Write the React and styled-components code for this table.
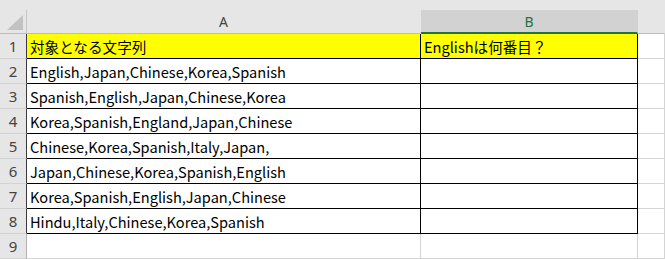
import styled, { createGlobalStyle } from "styled-components";

const GlobalStyle = createGlobalStyle`
  body {
    margin: 0;
    background: #ffffff;
    font-family: "Noto Sans CJK JP", "Noto Sans", sans-serif;
  }
`;

const Sheet = styled.div`
  width: 665px;
  height: 259px;
  overflow: hidden;
  background: #ffffff;
`;

const TopStrip = styled.div`
  height: 10px;
  background: #e6e6e6;
`;

const Row = styled.div`
  display: grid;
  grid-template-columns: 27px 394px 217px 1fr;
  height: ${(p) => (p.$header ? "24px" : "25px")};
`;

const Corner = styled.div`
  position: relative;
  background: #e6e6e6;
  border-right: 1px solid #c6c6c6;
  border-bottom: 1px solid #bdbdbd;
`;

const CornerTriangle = styled.div`
  position: absolute;
  right: 3px;
  bottom: 3px;
  width: 0;
  height: 0;
  border-left: 16px solid transparent;
  border-bottom: 15px solid #c2c2c2;
`;

const ColHeader = styled.div`
  display: flex;
  align-items: center;
  justify-content: center;
  font-family: "Noto Sans", sans-serif;
  font-size: 14px;
  color: ${(p) => (p.$active ? "#217346" : "#444444")};
  background: ${(p) => (p.$active ? "#d2d2d2" : "#e6e6e6")};
  border-right: 1px solid ${(p) => (p.$active ? "#d2d2d2" : "#e6e6e6")};
  border-bottom: ${(p) => (p.$active ? "2px solid #217346" : "1px solid #bdbdbd")};
  box-sizing: border-box;
`;

const RowHeader = styled.div`
  display: flex;
  align-items: center;
  justify-content: center;
  font-family: "Noto Sans", sans-serif;
  font-size: 15px;
  color: #444444;
  background: #e6e6e6;
  border-right: 1px solid ${(p) => (p.$boxed ? "#3a3a3a" : "#b0b0b0")};
  border-bottom: 1px solid #d3d3d3;
  box-sizing: border-box;
`;

const Cell = styled.div`
  display: flex;
  align-items: center;
  padding-left: 3px;
  font-size: 14.6px;
  color: #000000;
  white-space: nowrap;
  overflow: hidden;
  background: ${(p) => (p.$fill ? "#ffff00" : "#ffffff")};
  border-right: 1px solid ${(p) => (p.$boxed ? "#000000" : "#d4d4d4")};
  border-bottom: 1px solid ${(p) => (p.$boxed ? "#000000" : "#d4d4d4")};
  box-sizing: border-box;
`;

const rows = [
  ["対象となる文字列", "Englishは何番目？"],
  ["English,Japan,Chinese,Korea,Spanish", ""],
  ["Spanish,English,Japan,Chinese,Korea", ""],
  ["Korea,Spanish,England,Japan,Chinese", ""],
  ["Chinese,Korea,Spanish,Italy,Japan,", ""],
  ["Japan,Chinese,Korea,Spanish,English", ""],
  ["Korea,Spanish,English,Japan,Chinese", ""],
  ["Hindu,Italy,Chinese,Korea,Spanish", ""],
];

export default function App() {
  return (
    <Sheet>
      <GlobalStyle />
      <TopStrip />
      <Row $header>
        <Corner>
          <CornerTriangle />
        </Corner>
        <ColHeader>A</ColHeader>
        <ColHeader $active>B</ColHeader>
        <ColHeader />
      </Row>
      {rows.map((r, i) => (
        <Row key={i}>
          <RowHeader $boxed>{i + 1}</RowHeader>
          <Cell $boxed $fill={i === 0}>{r[0]}</Cell>
          <Cell $boxed $fill={i === 0}>{r[1]}</Cell>
          <Cell />
        </Row>
      ))}
      <Row>
        <RowHeader>9</RowHeader>
        <Cell />
        <Cell />
        <Cell />
      </Row>
    </Sheet>
  );
}
